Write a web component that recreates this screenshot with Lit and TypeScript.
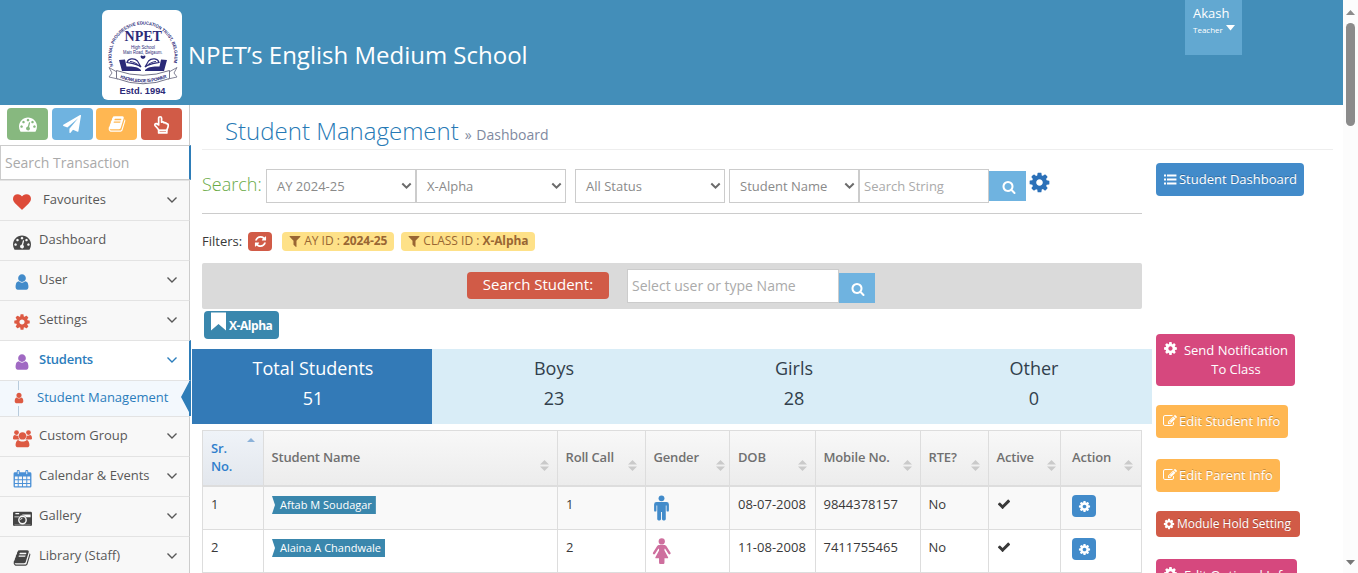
import { LitElement, html, svg, css, nothing } from "lit";
import { customElement, property } from "lit/decorators.js";

const P: Record<string, string> = {
  heart: "M896 1664q-26 0-44-18l-624-602q-10-8-27.5-26t-55.5-65.5-68-97.5-53.5-121-23.5-138q0-220 127-344t351-124q62 0 126.5 21.5t120 58 95.5 68.5 76 68q36-36 76-68t95.5-68.5 120-58 126.5-21.5q224 0 351 124t127 344q0 221-229 450l-623 600q-18 18-44 18z",
  cog: "M1152 896q0-106-75-181t-181-75-181 75-75 181 75 181 181 75 181-75 75-181zm512-109v222q0 12-8 23t-20 13l-185 28q-19 54-39 91 35 50 107 138 10 12 10 25t-9 23q-27 37-99 108t-94 71q-12 0-26-9l-138-108q-44 23-91 38-16 136-29 186-7 28-36 28h-222q-14 0-24.5-8.5t-11.5-21.5l-28-184q-49-16-90-37l-141 107q-10 9-25 9-14 0-25-11-126-114-165-168-7-10-7-23 0-12 8-23 15-21 51-66.5t54-70.5q-27-50-41-99l-183-27q-13-2-21-12.5t-8-23.5v-222q0-12 8-23t19-13l186-28q14-46 39-92-40-57-107-138-10-12-10-24 0-10 9-23 26-36 98.5-107.5t94.5-71.5q13 0 26 10l138 107q44-23 91-38 16-136 29-186 7-28 36-28h222q14 0 24.5 8.5t11.5 21.5l28 184q49 16 90 37l142-107q9-9 24-9 13 0 25 10 129 119 165 170 7 8 7 22 0 12-8 23-15 21-51 66.5t-54 70.5q26 50 41 98l183 28q13 2 21 12.5t8 23.5z",
  search: "M1216 832q0-185-131.5-316.5t-316.5-131.5-316.5 131.5-131.5 316.5 131.5 316.5 316.5 131.5 316.5-131.5 131.5-316.5zm512 832q0 52-38 90t-90 38q-54 0-90-38l-343-342q-179 124-399 124-143 0-273.5-55.5t-225-150-150-225-55.5-273.5 55.5-273.5 150-225 225-150 273.5-55.5 273.5 55.5 225 150 150 225 55.5 273.5q0 220-124 399l343 343q37 37 37 90z",
  user: "M1536 1399q0 109-62.5 187t-150.5 78h-854q-88 0-150.5-78t-62.5-187q0-85 8.5-160.5t31.5-152 58.5-131 94-89 134.5-34.5q131 128 313 128t313-128q76 0 134.5 34.5t94 89 58.5 131 31.5 152 8.5 160.5zm-256-887q0 159-112.5 271.5t-271.5 112.5-271.5-112.5-112.5-271.5 112.5-271.5 271.5-112.5 271.5 112.5 112.5 271.5z",
  refresh: "M1639 1056q0 5-1 7-64 268-268 434.5t-478 166.5q-146 0-282.5-55t-243.5-157l-129 129q-19 19-45 19t-45-19-19-45v-448q0-26 19-45t45-19h448q26 0 45 19t19 45-19 45l-137 137q71 66 161 102t187 36q134 0 250-65t186-179q11-17 53-117 8-23 30-23h192q13 0 22.5 9.5t9.5 22.5zm25-800v448q0 26-19 45t-45 19h-448q-26 0-45-19t-19-45 19-45l138-138q-148-137-349-137-134 0-250 65t-186 179q-11 17-53 117-8 23-30 23h-199q-13 0-22.5-9.5t-9.5-22.5v-7q65-268 270-434.5t480-166.5q146 0 284 55.5t245 156.5l130-129q19-19 45-19t45 19 19 45z",
  filter: "M1595 295q17 41-14 70l-493 493v742q0 42-39 59-13 5-25 5-27 0-45-19l-256-256q-19-19-19-45v-486l-493-493q-31-29-14-70 17-39 59-39h1280q42 0 59 39z",
  check: "M1671 566q0 40-28 68l-724 724-136 136q-28 28-68 28t-68-28l-136-136-362-362q-28-28-28-68t28-68l136-136q28-28 68-28t68 28l294 295 656-657q28-28 68-28t68 28l136 136q28 28 28 68z",
  gauge: "M384 1152q0-53-37.5-90.5t-90.5-37.5-90.5 37.5-37.5 90.5 37.5 90.5 90.5 37.5 90.5-37.5 37.5-90.5zm192-448q0-53-37.5-90.5t-90.5-37.5-90.5 37.5-37.5 90.5 37.5 90.5 90.5 37.5 90.5-37.5 37.5-90.5zm428 481l101-382q6-26-7.5-48.5t-38.5-29.5-48 6.5-30 39.5l-101 382q-60 5-107 43.5t-63 98.5q-20 77 20 146t117 89 146-20 89-117q16-60-6-117t-72-91zm660-33q0-53-37.5-90.5t-90.5-37.5-90.5 37.5-37.5 90.5 37.5 90.5 90.5 37.5 90.5-37.5 37.5-90.5zm-640-640q0-53-37.5-90.5t-90.5-37.5-90.5 37.5-37.5 90.5 37.5 90.5 90.5 37.5 90.5-37.5 37.5-90.5zm448 192q0-53-37.5-90.5t-90.5-37.5-90.5 37.5-37.5 90.5 37.5 90.5 90.5 37.5 90.5-37.5 37.5-90.5zm320 448q0 261-141 483-19 29-54 29h-1402q-35 0-54-29-141-221-141-483 0-182 71-348t191-286 286-191 348-71 348 71 286 191 191 286 71 348z",
  plane: "M1764 11q33 24 27 64l-256 1536q-5 29-32 45-14 8-31 8-11 0-24-5l-453-185-242 295q-18 23-49 23-13 0-22-4-19-7-30.5-23.5t-11.5-36.5v-349l864-1059-1069 925-395-162q-37-14-40-55-2-40 32-59l1664-960q15-9 32-9 20 0 36 11z",
  book: "M1703 478q40 57 18 129l-275 906q-19 64-76.5 107.5t-122.5 43.5h-923q-77 0-148.5-53.5t-99.5-131.5q-24-67-2-127 0-4 3-27t4-37q1-8-3-21.5t-3-19.5q2-11 8-21t16.5-23.5 16.5-23.5q23-38 45-91.5t30-91.5q3-10 .5-30t-.5-28q3-11 17-28t17-23q21-36 42-92t25-90q1-9-2.5-32t.5-28q4-13 22-30.5t22-22.5q19-26 42.5-84.5t27.5-96.5q1-8-3-25.5t-2-26.5q2-8 9-18t18-23 17-21q8-12 16.5-30.5t15-35 16-36 19.5-32 26.5-23.5 36-11.5 47.5 5.5l-1 3q38-9 51-9h761q74 0 114 56t18 130l-274 906q-36 119-71.5 153.5t-128.5 34.5h-869q-27 0-38 15-11 16-1 43 24 70 144 70h923q29 0 56-15.5t35-41.5l300-987q7-22 5-57 38 15 59 43zm-1064 2q-4 13 2 22.5t20 9.5h608q13 0 25.5-9.5t16.5-22.5l21-64q4-13-2-22.5t-20-9.5h-608q-13 0-25.5 9.5t-16.5 22.5zm-83 256q-4 13 2 22.5t20 9.5h608q13 0 25.5-9.5t16.5-22.5l21-64q4-13-2-22.5t-20-9.5h-608q-13 0-25.5 9.5t-16.5 22.5z",
  edit: "M888 1184l116-116-152-152-116 116v56h96v96h56zm440-720q-16-16-33 1l-350 350q-17 17-1 33t33-1l350-350q17-17 1-33zm80 594v190q0 119-84.5 203.5t-203.5 84.5h-832q-119 0-203.5-84.5t-84.5-203.5v-832q0-119 84.5-203.5t203.5-84.5h832q63 0 117 25 15 7 18 23 3 17-9 29l-49 49q-14 14-32 8-23-6-45-6h-832q-66 0-113 47t-47 113v832q0 66 47 113t113 47h832q66 0 113-47t47-113v-126q0-13 9-22l64-64q15-15 35-7t20 29zm-96-738l288 288-672 672h-288v-288zm444 132l-92 92-288-288 92-92q28-28 68-28t68 28l152 152q28 28 28 68t-28 68z",
  bookmark: "M256 128h1280v1540l-640-560-640 560z",
  list: "M128 256h256v256h-256zM512 256h1216v256h-1216zM128 768h256v256h-256zM512 768h1216v256h-1216zM128 1280h256v256h-256zM512 1280h1216v256h-1216z",
};

const drawn: Record<string, unknown> = {
  hand: svg`<g fill="none" stroke="currentColor" stroke-width="1.8" stroke-linejoin="round"><path d="M7 10.5V3.4a1.5 1.5 0 0 1 3.1 0V7.6c1-.5 2.200-.1 2.600.7 1-.5 2.100 0 2.400.9 1.100-.3 2 .5 2 1.600 0 2.400-1.100 3.500-1.600 5.400H7.200C6.300 14 4.500 12.700 3.200 11c-.7-1.100.3-2.300 1.500-1.900.9.300 1.500.9 2.300 1.400z"/><path d="M7 16.300h8.600v2.600H7z"/></g>`,
  group: svg`<circle cx="3.700" cy="3.800" r="2.500"/><circle cx="16.300" cy="3.800" r="2.500"/><path d="M0 10c0-3 1-3.800 2-3.800 1.500 1 3 .9 4 .6-.6 1.800 0 3.200 1 4.200H1.800C.6 11 0 10.700 0 10zM20 10c0-3-1-3.800-2-3.800-1.500 1-3 .9-4 .6.6 1.800 0 3.200-1 4.200h5.200c1.200 0 1.800-.3 1.800-1z"/><circle cx="10" cy="7.300" r="3.800"/><path d="M5.400 11.500c2.900 2.200 6.300 2.200 9.200 0 1.600.2 2.700 2.700 2.700 5.300 0 1.500-1 2.500-2.600 2.500H5.300c-1.600 0-2.600-1-2.600-2.500 0-2.600 1.100-5.100 2.700-5.300z"/>`,
  calendar: svg`<path fill-rule="evenodd" d="M2 3.500h16a1.400 1.400 0 0 1 1.400 1.400v13.200a1.400 1.400 0 0 1-1.400 1.400H2A1.400 1.400 0 0 1 .6 18.100V4.900A1.400 1.400 0 0 1 2 3.500zM2 8v2.800h3V8zM6 8v2.800h3.500V8zM10.500 8v2.800H14V8zM15 8v2.800h3V8zM2 11.800v2.900h3v-2.900zM6 11.800v2.900h3.500v-2.900zM10.500 11.800v2.900H14v-2.900zM15 11.800v2.900h3v-2.900zM2 15.700v2.500h3v-2.500zM6 15.700v2.500h3.500v-2.500zM10.500 15.700v2.500H14v-2.500zM15 15.700v2.500h3v-2.500z"/><rect x="4" y="1" width="3" height="5.500" rx="1.200"/><rect x="13" y="1" width="3" height="5.500" rx="1.200"/><path d="M5.500 2.200v3.200M14.500 2.200v3.200" stroke="#f8f8f8" stroke-width="1"/>`,
  camera: svg`<path fill-rule="evenodd" d="M1.500 3h17A1.500 1.500 0 0 1 20 4.500v12a1.500 1.500 0 0 1-1.500 1.500h-17A1.500 1.500 0 0 1 0 16.500v-12A1.500 1.500 0 0 1 1.500 3zM1.500 7.800v.9h4.700c1.800-3 5.800-3 7.600 0h4.700V5.800H10L8.600 7.800zM1.500 16.700h17v.3h-17zM2.500 4.300v1.200h4V4.300z"/><circle cx="10" cy="11.600" r="3.900" fill="none" stroke="#f8f8f8" stroke-width="1.500"/><path d="M8 11.600a2 2 0 0 1 2-2" fill="none" stroke="#f8f8f8" stroke-width=".9"/>`,
  male: svg`<circle cx="10" cy="3.500" r="3.100"/><path d="M4.800 7.300h10.400a2.600 2.600 0 0 1 2.600 2.600v6.300a1.250 1.250 0 0 1-2.500 0V11h-.8v14.300a1.500 1.500 0 0 1-1.500 1.500h-1a1.500 1.500 0 0 1-1.500-1.500V18h-1v7.300A1.500 1.500 0 0 1 8 26.800H7a1.500 1.500 0 0 1-1.500-1.500V11h-.8v5.200a1.250 1.250 0 0 1-2.500 0V9.900a2.600 2.600 0 0 1 2.600-2.600z"/>`,
  female: svg`<circle cx="10" cy="3.500" r="3.200"/><path d="M7.500 7.200h5c1.100 0 1.900.6 2.500 1.500l3.900 6.100c.9 1.600-1 2.800-2.100 1.400L13.500 11h-.7v1.900l3.700 6.900c.3.600 0 1-.7 1h-3v4.400c0 1-.5 1.600-1.500 1.600H8.700c-1 0-1.500-.6-1.500-1.600v-4.400h-3c-.7 0-1-.4-.7-1l3.700-6.900V11h-.7l-3.300 5.200c-1.100 1.400-3 .2-2.100-1.400L5 8.700c.6-.9 1.400-1.500 2.500-1.500z"/>`,
};

const icon = (name: string, size: number, color = "currentColor") =>
  P[name]
    ? html`<svg width=${size} height=${size} viewBox="0 0 1792 1792" fill=${color}><path d=${P[name]} /></svg>`
    : html`<svg width=${size} height=${name.endsWith("male") ? size * 1.35 : size} viewBox=${name.endsWith("male") ? "0 0 20 27" : "0 0 20 20"} fill=${color} color=${color}>${drawn[name]}</svg>`;

const chevron = html`<svg class="chev" width="12" height="8" viewBox="0 0 12 8"><path d="M1.500 1.500l4.500 4.500 4.500-4.500" fill="none" stroke="currentColor" stroke-width="1.400"/></svg>`;

@customElement("school-logo")
class SchoolLogo extends LitElement {
  static styles = css`
    :host { display: block; width: 80px; height: 90px; background: #fff; border-radius: 6px; }
    svg { display: block; }
    .serif { font-family: "Liberation Serif", serif; font-weight: 700; }
    .sans { font-family: "Liberation Sans", sans-serif; font-weight: 700; }
    .thin { font-family: "Liberation Sans", sans-serif; }
  `;
  render() {
    return html`<svg width="80" height="90" viewBox="0 0 80 90" fill="#2b2a78">
      <defs>
        <path id="ring" d="M11.500 57A31.500 31.500 0 1 1 70.500 57" />
        <path id="rib" d="M17 67.500Q41 77 65 67.500" />
      </defs>
      <text class="sans" font-size="4.500"><textPath href="#ring" textLength="116" startOffset="1" lengthAdjust="spacingAndGlyphs">NATIONAL PROGRESSIVE EDUCATION TRUST, BELGAUM</textPath></text>
      <text class="serif" x="22.500" y="31" font-size="15.500" textLength="37.500" lengthAdjust="spacingAndGlyphs">NPET</text>
      <text class="thin" x="29" y="38.500" font-size="5" textLength="24" lengthAdjust="spacingAndGlyphs">High School</text>
      <text class="thin" x="21" y="44" font-size="5" textLength="39.500" lengthAdjust="spacingAndGlyphs">Main Road, Belgaum.</text>
      <path d="M38.500 46q1.200-1 2.500.3 1.300-1.300 2.500-.3l-.5 2-2 1-2-1z"/>
      <path d="M17 50l6-.5 1.500 7c6-.5 12 .5 14.500 3.500v1H20zM65 50l-6-.5-1.500 7c-6-.5-12 .5-14.500 3.500v1h19z"/>
      <path d="M25 52.500c1-4 7-5 10.500-1.500l3.500 6c-4-3-9-3.500-14-4.500zM57 52.500c-1-4-7-5-10.500-1.500l-3.500 6c4-3 9-3.500 14-4.500z" fill="#fff" stroke="#2b2a78" stroke-width="1.200"/>
      <path d="M28 51.500c3 0 7 2 9.500 4.500M54 51.500c-3 0-7 2-9.500 4.500" stroke="#2b2a78" fill="none"/>
      <path d="M15 62l-8-4.500 3 5.500-3 4 9 2M67 62l8-4.500-3 5.500 3 4-9 2" fill="#fff" stroke="#77778c" stroke-width=".9"/>
      <path d="M14.500 60.500Q41 70 67.500 60.500V68.500Q41 79 14.500 68.500z" fill="#fff" stroke="#66667d" stroke-width=".9"/>
      <text class="sans" font-size="4.600"><textPath href="#rib" startOffset="1" textLength="48">KNOWLEDGE IS POWER</textPath></text>
      <text class="sans" x="17.500" y="83.500" font-size="9.300" textLength="46">Estd. 1994</text>
    </svg>`;
  }
}

const menu = [
  { label: "Favourites", icon: "heart", color: "#dd4b39", arrow: true, pad: 4 },
  { label: "Dashboard", icon: "gauge", color: "#474747" },
  { label: "User", icon: "user", color: "#428bca", arrow: true },
  { label: "Settings", icon: "cog", color: "#dd5a43", arrow: true },
  { label: "Students", icon: "user", color: "#a069c3", arrow: true, open: true },
  { label: "Custom Group", icon: "group", color: "#dd5a43", arrow: true },
  { label: "Calendar & Events", icon: "calendar", color: "#4a90d6", arrow: true },
  { label: "Gallery", icon: "camera", color: "#444", arrow: true },
  { label: "Library (Staff)", icon: "book", color: "#444", arrow: true },
];

@customElement("side-menu")
class SideMenu extends LitElement {
  static styles = css`
    :host { display: block; width: 191px; margin-right: -1px; height: 468px; overflow: hidden; font-size: 13px; color: #585858; flex: none; }
    svg { display: block; }
    .short { display: flex; gap: 3.600px; padding: 3px 0 5px 7px; margin-right: 1px; border-right: 1px solid #ccc; background: #fff; }
    .short span { width: 41px; height: 32px; border-radius: 4px; display: grid; place-items: center; color: #fff; flex: none; }
    .find { box-sizing: border-box; height: 35px; border: 1px solid #ccc; border-right: 2px solid #2e7db8; padding-left: 4px; font-size: 14px; line-height: 33px; color: #aaa; background: #fff; }
    .item { box-sizing: border-box; height: 40px; border-top: 1px solid #e3e3e3; border-right: 1px solid #ccc; margin-right: 1px; background: #f8f8f8; display: flex; align-items: center; padding: 0 11px 0 10px; line-height: 19px; }
    .item .ic { width: 24px; display: grid; place-items: center; margin: 3px 5px 0 0; }
    .item .lab { flex: 1; padding-bottom: 2px; }
    .chev { margin-bottom: 2px; }
    .open { background: #fff; color: #2b7dbc; border-right: 2px solid #2e7db8; margin-right: 0; font-weight: 600; letter-spacing: -.25px; padding-right: 11px; }
    .sub { box-sizing: border-box; height: 36px; border-top: 1px solid #e3e3e3; background: #f3f8fd; display: flex; align-items: center; color: #2b7dbc; border-right: 2px solid #2e7db8; }
    .rail { width: 37px; height: 35px; display: grid; place-items: center; background: linear-gradient(#b8cbdc, #b8cbdc) 18px 0 / 1px 100% no-repeat; }
    .rail span { background: #f3f8fd; padding: 2px 0; margin-bottom: 2px; }
    .sub .name { flex: 1; white-space: nowrap; padding-bottom: 3px; }
    .tip { flex: none; margin-bottom: 3px; }
  `;
  render() {
    return html`
      <div class="short">
        ${[["gauge", "#87b87f"], ["plane", "#6fb3e0"], ["book", "#ffb752"], ["hand", "#d15b47"]].map(
          ([n, c]) => html`<span style="background:${c}">${icon(n, n === "hand" ? 19 : 18)}</span>`)}
      </div>
      <div class="find">Search Transaction</div>
      ${menu.map((m) => html`
        <div class="item ${m.open ? "open" : ""}">
          <span class="ic">${icon(m.icon, drawn[m.icon] ? 19 : 18, m.color)}</span>
          <span class="lab" style="padding-left:${m.pad ?? 0}px">${m.label}</span>${m.arrow ? chevron : nothing}
        </div>
        ${m.open ? html`<div class="sub"><span class="rail"><span>${icon("user", 12, "#dd5a43")}</span></span><span class="name">Student Management</span>
          <svg class="tip" width="8" height="32" viewBox="0 0 8 32"><path d="M8 1v30L0 16z" fill="#2e7db8"/></svg></div>` : nothing}`)}
    `;
  }
}

@customElement("select-box")
class SelectBox extends LitElement {
  @property() text = "";
  static styles = css`
    :host { box-sizing: border-box; display: flex; align-items: center; justify-content: space-between; height: 34px; border: 1px solid #ccc; padding: 0 3px 0 10px; color: #8a8a8a; font-size: 13px; background: #fff; flex: none; }
  `;
  render() {
    return html`<span>${this.text}</span><svg width="11" height="8" viewBox="0 0 11 8"><path d="M1.300 1.500l4.200 4.200 4.200-4.200" fill="none" stroke="#6b6b6b" stroke-width="2"/></svg>`;
  }
}

const cols: [string, number][] = [["Sr. No.", 61], ["Student Name", 294], ["Roll Call", 88], ["Gender", 84], ["DOB", 86], ["Mobile No.", 105], ["RTE?", 68], ["Active", 72], ["Action", 81]];
const rows = [
  ["1", "Aftab M Soudagar", "1", "male", "08-07-2008", "9844378157", "No"],
  ["2", "Alaina A Chandwale", "2", "female", "11-08-2008", "7411755465", "No"],
];

@customElement("student-table")
class StudentTable extends LitElement {
  static styles = css`
    :host { display: block; width: 940px; font-size: 13px; color: #393939; }
    svg { display: block; }
    .row { display: grid; box-sizing: border-box; border-left: 1px solid #ddd; height: 43px; border-bottom: 1px solid #ddd; background: #fff; }
    .row:nth-child(2) { background: #f9f9f9; }
    .cell { box-sizing: border-box; border-right: 1px solid #ddd; padding: 8px 0 0 8px; line-height: 18px; white-space: nowrap; }
    .cell:nth-child(n + 6) { padding-left: 7.500px; }
    .cell:last-child { padding-left: 11px; }
    .head { height: 57px; border-top: 1px solid #ddd; border-bottom: 2px solid #ddd; background: linear-gradient(#f8f8f8, #ececec); color: #707070; font-weight: 600; letter-spacing: -.17px; }
    .head .cell { display: flex; align-items: center; justify-content: space-between; padding-top: 0; padding-bottom: 2px; padding-right: 8px; }
    .head .cell:nth-child(n + 2):nth-child(-n + 4) { padding-left: 7.500px; }
    .head .cell:nth-child(4), .head .cell:nth-child(8) { padding-right: 4px; }
    .head .first { color: #307ecc; background: linear-gradient(#eff3f8, #e3e7ed); white-space: normal; }
    .first span { width: 30px; }
    .sort { margin-top: 17px; }
    .first .sort { margin: -34px 0 0; }
    .tag { display: inline-block; height: 18px; line-height: 18px; margin: 1px 0 0; background: #3a87ad; color: #fff; font-size: 11px; padding: 0 4px 0 8px; clip-path: polygon(0 0, 100% 0, 100% 100%, 0 100%, 3px 50%); }
    .cell.icon { padding: 8px 0 0 6px; }
    .cell.ok { padding-top: 10px; }
    .act { width: 24px; height: 22px; border-radius: 4px; background: #428bca; color: #fff; display: grid; place-items: center; }
  `;
  render() {
    const tpl = cols.map((c) => c[1] + "px").join(" ");
    return html`
      <div class="row head" style="grid-template-columns:${tpl}">
        ${cols.map(([c], i) => html`<div class="cell ${i ? "" : "first"}"><span>${c}</span>
          ${i ? html`<svg class="sort" width="9" height="11" viewBox="0 0 9 11" fill="#cacaca"><path d="M0 4.500L4.500 0 9 4.500zM0 6.500L4.500 11 9 6.500z"/></svg>`
            : html`<svg class="sort" width="8" height="4" viewBox="0 0 8 4" fill="#8cb2d9"><path d="M0 4l4-4 4 4z"/></svg>`}</div>`)}
      </div>
      ${rows.map((r) => html`<div class="row" style="grid-template-columns:${tpl}">
        <div class="cell">${r[0]}</div>
        <div class="cell"><span class="tag">${r[1]}</span></div>
        <div class="cell">${r[2]}</div>
        <div class="cell icon">${icon(r[3], r[3] === "male" ? 19 : 19.500, r[3] === "male" ? "#428bca" : "#ce6f9e")}</div>
        <div class="cell">${r[4]}</div><div class="cell">${r[5]}</div><div class="cell">${r[6]}</div>
        <div class="cell ok">${icon("check", 14)}</div>
        <div class="cell"><span class="act">${icon("cog", 13)}</span></div>
      </div>`)}
    `;
  }
}

@customElement("app-root")
class AppRoot extends LitElement {
  static styles = css`
    :host { display: flex; width: 1358px; height: 573px; overflow: hidden; background: #fff; font-family: "Open Sans", sans-serif; font-size: 13px; color: #393939; }
    svg { display: block; }
    .page { width: 1343px; flex: none; }
    .top { height: 105px; background: #438eb9; display: flex; align-items: flex-start; color: #fff; }
    .top school-logo { margin: 10px 0 0 102px; }
    .brand { font-size: 24px; line-height: 34px; margin: 38px 0 0 6px; flex: 1; }
    .me { box-sizing: border-box; width: 57px; height: 55px; margin-right: 101px; background: #62a8d1; padding: 5px 0 0 8px; line-height: 17px; }
    .role { font-size: 8px; display: flex; gap: 3px; line-height: 15px; align-items: center; }
    .role svg { margin-top: -3px; }
    .body { display: flex; }
    .main { width: 962px; flex: none; }
    .title { display: flex; align-items: baseline; box-sizing: border-box; width: 1131px; height: 45px; margin-left: 12px; border-bottom: 1px solid #eee; padding: 10px 0 0 23px; font-size: 24px; font-weight: 300; line-height: 32px; color: #2679b5; white-space: nowrap; }
    .title small { font-size: 14px; color: #8089a0; font-weight: 400; margin-left: 6px; word-spacing: 1px; }
    .bar { box-sizing: border-box; display: flex; align-items: flex-start; margin-left: 12px; width: 940px; height: 64px; border-bottom: 1px solid #ccc; padding-top: 19px; }
    .bar b { width: 64px; font-size: 18px; line-height: 31px; color: #69aa46; font-weight: 300; }
    .text { box-sizing: border-box; height: 34px; line-height: 32px; border: 1px solid #ccc; background: #fff; color: #aaa; padding-left: 4px; }
    .go { width: 37px; height: 30px; background: #6fb3e0; color: #fff; display: grid; place-items: center; margin-top: 2px; }
    .go svg { margin: 1px 0 0 2px; }
    .gear { margin: 2px 0 0 2px; }
    .filters { display: flex; align-items: center; height: 20px; margin: 17px 0 0 12px; }
    .redo { width: 24px; height: 19px; border-radius: 4px; background: #d15b47; display: grid; place-items: center; color: #fff; margin: 0 10px 0 6px; }
    .pill { display: flex; align-items: center; box-sizing: border-box; height: 19px; border-radius: 4px; background: #fee188; color: #996633; font-size: 12px; padding: 0 7px 1px 6px; margin-right: 7px; gap: 2px; white-space: nowrap; }
    .pill b { letter-spacing: -.1px; }
    .strip { display: flex; width: 940px; height: 46px; margin: 12px 0 0 12px; background: #dadada; border-radius: 2px; }
    .ss { width: 142px; height: 27px; border-radius: 4px; background: #d15b47; color: #fff; font-size: 15px; line-height: 25px; text-align: center; margin: 9px 18px 0 265px; }
    .class { display: flex; align-items: flex-start; box-sizing: border-box; width: 75px; height: 28px; border-radius: 4px; background: #3a87ad; color: #fff; font-weight: 700; font-size: 12px; letter-spacing: -.45px; margin: 2px 0 10px 14px; padding: 0 4px; line-height: 30px; white-space: nowrap; }
    .stats { display: grid; grid-template-columns: repeat(4, 240px); width: 960px; height: 75px; margin-left: 2px; background: #d9edf7; color: #31404c; font-size: 18px; line-height: 30px; text-align: center; }
    .stats div { padding: 4px 0 0 4px; }
    .stats .on { background: #337ab7; color: #fff; padding-left: 2px; }
    student-table { margin: 6px 0 0 12px; }
    .side { display: flex; flex-direction: column; align-items: flex-start; padding: 13px 0 0 4px; }
    .btn { box-sizing: border-box; display: flex; align-items: center; border-radius: 4px; color: #fff; padding: 0 7px 1px; gap: 2px; height: 33px; white-space: nowrap; text-shadow: 0 -1px 0 rgba(0,0,0,.25); font-size: 13px; }
    .blue { background: #428bca; height: 33px; width: 148px; }
    .pink { background: #d6487e; align-items: flex-start; gap: 6px; text-align: center; line-height: 19px; padding-top: 7px; text-shadow: none; }
    .orange { background: #ffb752; }
    .red { background: #d15b47; width: 144px; height: 26px; font-size: 12px; }
    .scroll { width: 15px; height: 573px; background: #fcfcfc; display: flex; flex-direction: column; align-items: center; box-sizing: border-box; padding: 10px 0 8px; }
    .thumb { width: 9px; height: 103px; border-radius: 5px; background: #8b8b8b; margin-top: 8px; flex: none; }
    .grow { flex: 1; }
  `;
  render() {
    return html`
      <div class="page">
        <div class="top">
          <school-logo></school-logo>
          <div class="brand">NPET’s English Medium School</div>
          <div class="me">Akash<div class="role">Teacher<svg width="9" height="6" viewBox="0 0 9 6" fill="#fff"><path d="M0 0h9L4.500 5.500z"/></svg></div></div>
        </div>
        <div class="body">
          <side-menu></side-menu>
          <div class="main">
            <div class="title"><span>Student Management</span><small>» Dashboard</small></div>
            <div class="bar">
              <b>Search:</b>
              <select-box text="AY 2024-25" style="width:150px"></select-box>
              <select-box text="X-Alpha" style="width:150px;margin-right:9px"></select-box>
              <select-box text="All Status" style="width:150px;margin-right:4px"></select-box>
              <select-box text="Student Name" style="width:130px"></select-box>
              <div class="text" style="width:130px">Search String</div>
              <div class="go">${icon("search", 14)}</div>
              <div class="gear">${icon("cog", 23, "#2b70b8")}</div>
            </div>
            <div class="filters">Filters:<span class="redo">${icon("refresh", 13)}</span>
              <span class="pill">${icon("filter", 14)}<span>AY ID : <b>2024-25</b></span></span>
              <span class="pill">${icon("filter", 14)}<span>CLASS ID : <b>X-Alpha</b></span></span>
            </div>
            <div class="strip"><div class="ss">Search Student:</div>
              <div class="text" style="width:212px;margin-top:6px;font-size:14px">Select user or type Name</div>
              <div class="go" style="margin-top:10px;width:36px">${icon("search", 14)}</div>
            </div>
            <div class="class">${icon("bookmark", 21)}<span>X-Alpha</span></div>
            <div class="stats">
              ${[["Total Students", 51], ["Boys", 23], ["Girls", 28], ["Other", 0]].map(([a, b], i) => html`<div class=${i ? "" : "on"}>${a}<br>${b}</div>`)}
            </div>
            <student-table></student-table>
          </div>
          <div class="side">
            <div class="btn blue" style="margin-top:45px">${icon("list", 15)}Student Dashboard</div>
            <div class="btn pink" style="margin-top:138px;width:139px;height:52px">${icon("cog", 15)}<span>Send Notification<br>To Class</span></div>
            <div class="btn orange" style="margin-top:19px;width:132px">${icon("edit", 14)}Edit Student Info</div>
            <div class="btn orange" style="margin-top:21px;width:124px">${icon("edit", 14)}Edit Parent Info</div>
            <div class="btn red" style="margin-top:19px">${icon("cog", 12)}Module Hold Setting</div>
            <div class="btn pink" style="margin-top:22px;width:141px">${icon("cog", 15)}<span>Edit Optional Info</span></div>
          </div>
        </div>
      </div>
      <div class="scroll">
        <svg width="9" height="5" viewBox="0 0 9 5" fill="#8b8b8b"><path d="M0 5l4.500-5L9 5z"/></svg>
        <div class="thumb"></div><div class="grow"></div>
        <svg width="9" height="5" viewBox="0 0 9 5" fill="#777"><path d="M0 0l4.500 5L9 0z"/></svg>
      </div>`;
  }
}
